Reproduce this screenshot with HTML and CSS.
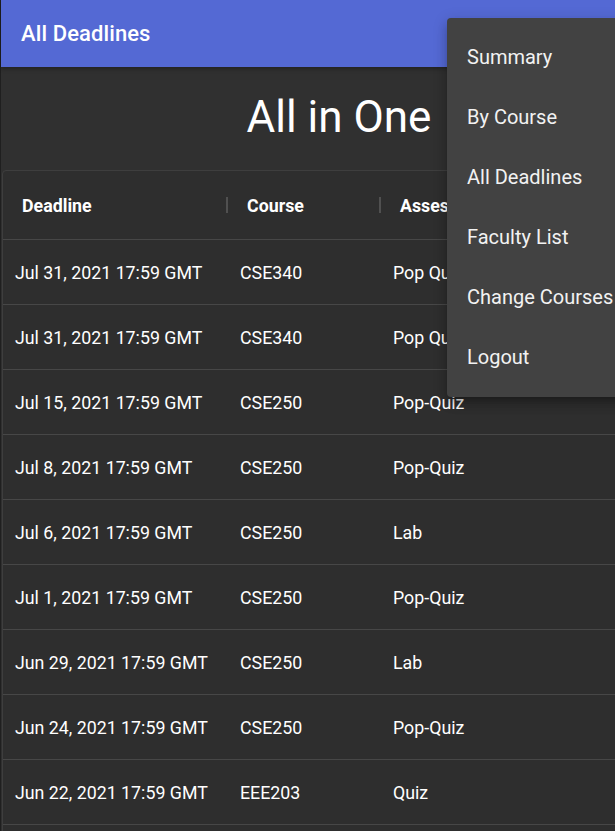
FILE: index.html
```html
<!DOCTYPE html>
<html>
<head>
<meta charset="utf-8">
<link rel="stylesheet" href="styles.css">
</head>
<body>
<div class="page">
  <header class="appbar"><span class="appbar-title">All Deadlines</span></header>
  <main class="content">
    <h1 class="title">All in One</h1>
    <div class="table">
      <div class="row head">
        <div class="cell c1">Deadline<span class="sep"></span></div>
        <div class="cell c2">Course<span class="sep"></span></div>
        <div class="cell c3">Assessment</div>
      </div>
      <div class="row"><div class="cell c1">Jul 31, 2021 17:59 GMT</div><div class="cell c2">CSE340</div><div class="cell c3">Pop Quiz</div></div>
      <div class="row"><div class="cell c1">Jul 31, 2021 17:59 GMT</div><div class="cell c2">CSE340</div><div class="cell c3">Pop Quiz</div></div>
      <div class="row"><div class="cell c1">Jul 15, 2021 17:59 GMT</div><div class="cell c2">CSE250</div><div class="cell c3">Pop-Quiz</div></div>
      <div class="row"><div class="cell c1">Jul 8, 2021 17:59 GMT</div><div class="cell c2">CSE250</div><div class="cell c3">Pop-Quiz</div></div>
      <div class="row"><div class="cell c1">Jul 6, 2021 17:59 GMT</div><div class="cell c2">CSE250</div><div class="cell c3">Lab</div></div>
      <div class="row"><div class="cell c1">Jul 1, 2021 17:59 GMT</div><div class="cell c2">CSE250</div><div class="cell c3">Pop-Quiz</div></div>
      <div class="row"><div class="cell c1">Jun 29, 2021 17:59 GMT</div><div class="cell c2">CSE250</div><div class="cell c3">Lab</div></div>
      <div class="row"><div class="cell c1">Jun 24, 2021 17:59 GMT</div><div class="cell c2">CSE250</div><div class="cell c3">Pop-Quiz</div></div>
      <div class="row"><div class="cell c1">Jun 22, 2021 17:59 GMT</div><div class="cell c2">EEE203</div><div class="cell c3">Quiz</div></div>
      <div class="row"></div>
    </div>
  </main>
  <nav class="menu">
    <div class="menu-item">Summary</div>
    <div class="menu-item">By Course</div>
    <div class="menu-item">All Deadlines</div>
    <div class="menu-item">Faculty List</div>
    <div class="menu-item">Change Courses</div>
    <div class="menu-item">Logout</div>
  </nav>
</div>
</body>
</html>
```
FILE: styles.css
```css
html, body {
  margin: 0;
  padding: 0;
  background: #303030;
  overflow: hidden;
  height: 831px;
}
body {
  font-family: Roboto, "Noto Sans", "Liberation Sans", sans-serif;
  color: #ffffff;
}
.page {
  position: relative;
  width: 676px;
  border-left: 1px solid rgba(0, 0, 0, 0.35);
}
.appbar {
  height: 67px;
  background: #5469d4;
  display: flex;
  align-items: center;
  padding-left: 20px;
  box-shadow: 0 2px 4px rgba(0, 0, 0, 0.3);
}
.appbar-title {
  font-size: 22px;
  font-weight: 500;
  letter-spacing: 0.1px;
}
.content {
  padding: 0 1px;
}
.title {
  margin: 0;
  padding: 24px 0 27px;
  font-size: 44px;
  line-height: 52px;
  font-weight: 400;
  text-align: center;
}
.table {
  background: #2e2e2e;
  border: 1px solid #3e3e3e;
  border-radius: 4px;
}
.row {
  display: flex;
  height: 64px;
  align-items: center;
  border-top: 1px solid #474747;
}
.row.head {
  height: 68px;
  border-top: none;
  font-weight: 700;
}
.cell {
  font-size: 17.8px;
  box-sizing: border-box;
  padding-left: 12px;
  position: relative;
  white-space: nowrap;
}
.head .cell {
  padding-left: 19px;
}
.c1 { width: 225px; }
.c2 { width: 153px; }
.c3 { flex: 1; }
.sep {
  position: absolute;
  right: 0;
  top: 50%;
  width: 2px;
  height: 16px;
  margin-top: -8px;
  background: #505050;
}
.menu {
  position: absolute;
  left: 446px;
  top: 18px;
  width: 210px;
  padding: 9px 0 10px;
  background: #424242;
  border-radius: 4px;
  box-shadow: 0 5px 5px -3px rgba(0,0,0,0.2), 0 8px 10px 1px rgba(0,0,0,0.14), 0 3px 14px 2px rgba(0,0,0,0.12);
}
.menu-item {
  height: 60px;
  display: flex;
  align-items: center;
  padding-left: 20px;
  font-size: 20px;
  color: #f2f2f2;
  white-space: nowrap;
}
```
